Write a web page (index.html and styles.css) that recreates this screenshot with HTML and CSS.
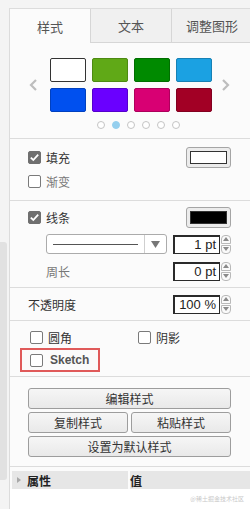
FILE: index.html
```html
<!DOCTYPE html>
<html lang="zh">
<head>
    <meta charset="UTF-8">
    <meta name="viewport" content="width=device-width, initial-scale=1.0">
    <title>Format</title>
    <link rel="stylesheet" href="styles.css">
</head>
<body>
    <div class="side">
        <div class="thumb"></div>
    </div>
    <div class="panel">
        <div class="tabs">
            <div class="tab active">样式</div>
            <div class="tab">文本</div>
            <div class="tab">调整图形</div>
        </div>

        <div class="section swatches">
            <div class="swatch-row">
                <svg class="arrow" width="8" height="12" viewBox="0 0 8 12"><path d="M7 1 L2 6 L7 11" fill="none" stroke="#bdbdbd" stroke-width="2.2"/></svg>
                <div class="grid">
                    <div class="swatch white"></div>
                    <div class="swatch" style="background:#60a917;border-color:#4d8a12"></div>
                    <div class="swatch" style="background:#008a00;border-color:#006e00"></div>
                    <div class="swatch" style="background:#1ba1e2;border-color:#1681b5"></div>
                    <div class="swatch" style="background:#0050ef;border-color:#0040bf"></div>
                    <div class="swatch" style="background:#6a00ff;border-color:#5500cc"></div>
                    <div class="swatch" style="background:#d80073;border-color:#ad005c"></div>
                    <div class="swatch" style="background:#a20025;border-color:#820020"></div>
                </div>
                <svg class="arrow" width="8" height="12" viewBox="0 0 8 12"><path d="M1 1 L6 6 L1 11" fill="none" stroke="#bdbdbd" stroke-width="2.2"/></svg>
            </div>
            <div class="dots">
                <span class="dot"></span>
                <span class="dot on"></span>
                <span class="dot"></span>
                <span class="dot"></span>
                <span class="dot"></span>
                <span class="dot"></span>
            </div>
        </div>

        <div class="section fill">
            <div class="row">
                <label class="check"><span class="box checked"></span>填充</label>
                <div class="color-btn"><span class="color-in" style="background:#fff"></span></div>
            </div>
            <div class="row">
                <label class="check muted"><span class="box"></span>渐变</label>
            </div>
        </div>

        <div class="section line">
            <div class="row">
                <label class="check"><span class="box checked"></span>线条</label>
                <div class="color-btn"><span class="color-in" style="background:#000"></span></div>
            </div>
            <div class="row sub">
                <div class="select">
                    <div class="preview"><span></span></div>
                    <div class="drop"><svg width="9" height="7" viewBox="0 0 9 7"><path d="M0 0 H9 L4.5 7 Z" fill="#777"/></svg></div>
                </div>
                <div class="num">
                    <div class="field">1 pt</div>
                    <div class="spin"><span class="up"></span><span class="down"></span></div>
                </div>
            </div>
            <div class="row sub">
                <span class="label muted">周长</span>
                <div class="num">
                    <div class="field">0 pt</div>
                    <div class="spin"><span class="up"></span><span class="down"></span></div>
                </div>
            </div>
        </div>

        <div class="section opacity">
            <div class="row">
                <span class="label">不透明度</span>
                <div class="num">
                    <div class="field">100 %</div>
                    <div class="spin"><span class="up"></span><span class="down"></span></div>
                </div>
            </div>
        </div>

        <div class="section options">
            <div class="opt-row">
                <label class="check"><span class="box"></span>圆角</label>
                <label class="check shadow"><span class="box"></span>阴影</label>
            </div>
            <div class="sketch">
                <label class="check"><span class="box"></span>Sketch</label>
            </div>
        </div>

        <div class="section actions">
            <button class="btn">编辑样式</button>
            <div class="pair">
                <button class="btn">复制样式</button>
                <button class="btn">粘贴样式</button>
            </div>
            <button class="btn">设置为默认样式</button>
        </div>

        <div class="props">
            <div class="col first"><span class="tri"></span>属性</div>
            <div class="col">值</div>
        </div>
        <div class="mark">@稀土掘金技术社区</div>
    </div>
</body>
</html>
```

FILE: styles.css
```css
body {
    margin: 0;
    display: flex;
    height: 509px;
    overflow: hidden;
    background-color: #f4f4f4;
    font-family: "Noto Sans CJK SC", "Liberation Sans", sans-serif;
    font-size: 12px;
    color: #333;
}
.side {
    width: 9px;
    flex-shrink: 0;
}
.thumb {
    margin-top: 242px;
    width: 7px;
    height: 238px;
    background: #e1e1e1;
    border-radius: 0 3px 3px 0;
}
.panel {
    flex: 1;
    margin-top: 8px;
    border-left: 1px solid #dcdcdc;
    border-top: 1px solid #dcdcdc;
    background: #fbfbfb;
    display: flex;
    flex-direction: column;
}
.tabs {
    display: flex;
    height: 34px;
}
.tab {
    box-sizing: border-box;
    display: flex;
    align-items: center;
    justify-content: center;
    font-size: 13px;
    color: #555;
    background: #f0f0f0;
    border-left: 1px solid #d6d6d6;
    border-bottom: 1px solid #d6d6d6;
    width: 81px;
}
.tab.active {
    width: 80px;
    background: #fbfbfb;
    border: none;
}
.tab:last-child {
    flex: 1;
}
.section {
    border-bottom: 1px solid #dcdcdc;
}
.swatches {
    padding: 15px 0 9px;
}
.swatch-row {
    display: flex;
    align-items: center;
    padding-left: 19px;
    gap: 13px;
}
.swatch-row .arrow:last-child {
    margin-left: -3px;
}
.grid {
    display: grid;
    grid-template-columns: repeat(4, 36px);
    grid-auto-rows: 24px;
    gap: 6px;
}
.swatch {
    box-sizing: border-box;
    border: 1px solid;
    border-radius: 2px;
}
.swatch.white {
    background: #fff;
    border-color: #333;
}
.dots {
    display: flex;
    gap: 7px;
    padding-left: 87px;
    margin-top: 9px;
}
.dot {
    box-sizing: border-box;
    width: 8px;
    height: 8px;
    border-radius: 50%;
    border: 1px solid #c4c4c4;
    background: #fff;
}
.dot.on {
    background: #95cfee;
    border-color: #95cfee;
}
.row {
    display: flex;
    align-items: center;
    justify-content: space-between;
    padding: 0 21px 0 18px;
}
.fill {
    padding: 8px 0;
}
.fill .row {
    height: 21px;
}
.fill .row + .row {
    margin-top: 3px;
}
.check {
    display: flex;
    align-items: center;
    gap: 5px;
}
.box {
    box-sizing: border-box;
    width: 13px;
    height: 13px;
    border: 1px solid #7a7a7a;
    border-radius: 2px;
    background: #fff;
}
.box.checked {
    background: #6f6f6f url("data:image/svg+xml;utf8,<svg xmlns='http://www.w3.org/2000/svg' width='13' height='13' viewBox='0 0 13 13'><path d='M2.8 6.6 L5.3 9 L10.2 3.6' fill='none' stroke='white' stroke-width='1.8'/></svg>") center no-repeat;
    border-color: #6f6f6f;
}
.muted {
    color: #777;
}
.color-btn {
    box-sizing: border-box;
    width: 45px;
    height: 21px;
    border: 1px solid #a5a5a5;
    border-radius: 3px;
    background: #ececec;
    display: flex;
    padding: 3px;
}
.color-in {
    flex: 1;
    border: 1px solid #333;
}
.line {
    padding: 6px 0 6px;
}
.line .row:first-child {
    height: 21px;
}
.row.sub {
    padding-left: 36px;
    padding-right: 21px;
    height: 20px;
    margin-top: 6px;
}
.row.sub + .row.sub {
    margin-top: 7px;
}
.select {
    box-sizing: border-box;
    width: 121px;
    height: 20px;
    border: 1px solid #ababab;
    border-radius: 3px;
    background: #fff;
    display: flex;
}
.preview {
    flex: 1;
    display: flex;
    align-items: center;
    padding: 0 6px;
}
.preview span {
    flex: 1;
    height: 1px;
    background: #555;
}
.drop {
    width: 21px;
    border-left: 1px solid #cfcfcf;
    display: flex;
    align-items: center;
    justify-content: center;
}
.num {
    display: flex;
    align-items: center;
    gap: 1px;
}
.field {
    box-sizing: border-box;
    width: 47px;
    height: 19px;
    border: 2px solid #2a2a2a;
    border-right-width: 1px;
    border-bottom-width: 1px;
    background: #fff;
    text-align: right;
    padding-right: 3px;
    font-family: "Liberation Sans", sans-serif;
    font-size: 13px;
    line-height: 16px;
    color: #222;
}
.spin {
    width: 10px;
    height: 19px;
    display: flex;
    flex-direction: column;
    justify-content: space-between;
}
.spin span {
    box-sizing: border-box;
    height: 9px;
    border: 1px solid #b9b9b9;
    background: #fafafa;
    position: relative;
}
.spin .up {
    border-radius: 4px 4px 0 0;
}
.spin .down {
    border-radius: 0 0 4px 4px;
}
.spin span::after {
    content: "";
    position: absolute;
    left: 1px;
    top: 1px;
    border-left: 3px solid transparent;
    border-right: 3px solid transparent;
}
.spin .up::after {
    border-bottom: 4px solid #8a8a8a;
}
.spin .down::after {
    border-top: 4px solid #8a8a8a;
}
.opacity {
    padding: 6px 0;
}
.opacity .row {
    height: 20px;
    padding-left: 18px;
}
.options {
    padding: 7px 0 4px;
}
.opt-row {
    display: flex;
    height: 18px;
    align-items: center;
    padding-left: 20px;
}
.shadow {
    margin-left: 66px;
}
.sketch {
    box-sizing: border-box;
    margin: 2px 0 0 10px;
    width: 80px;
    height: 24px;
    border: 2px solid #e05a5a;
    display: flex;
    align-items: center;
    padding-left: 8px;
}
.sketch .check {
    gap: 7px;
    color: #555;
    font-family: "Liberation Sans", sans-serif;
    font-weight: bold;
    font-size: 12px;
}
.actions {
    padding: 11px 21px 9px 18px;
    display: flex;
    flex-direction: column;
    gap: 3px;
}
.pair {
    display: flex;
    gap: 3px;
}
.pair .btn {
    flex: 1;
}
.btn {
    height: 21px;
    border: 1px solid #9d9d9d;
    border-radius: 3px;
    background: linear-gradient(#f6f6f6, #e9e9e9);
    font-family: "Noto Sans CJK SC", sans-serif;
    font-size: 12px;
    color: #333;
    padding: 0;
}
.props {
    display: flex;
    margin: 4px 2px 0;
    height: 18px;
    gap: 2px;
}
.col {
    background: #e6e6e6;
    display: flex;
    align-items: center;
    font-weight: bold;
    font-size: 12px;
    color: #222;
    flex: 1;
}
.col.first {
    flex: 0 0 116px;
    padding-left: 5px;
    box-sizing: border-box;
    gap: 6px;
}
.tri {
    border-top: 3px solid transparent;
    border-bottom: 3px solid transparent;
    border-left: 4px solid #a8a8a8;
}
.mark {
    text-align: right;
    padding: 5px 8px 0 0;
    font-size: 6px;
    color: #c9c9c9;
    background: #fff;
    flex: 1;
}
```
